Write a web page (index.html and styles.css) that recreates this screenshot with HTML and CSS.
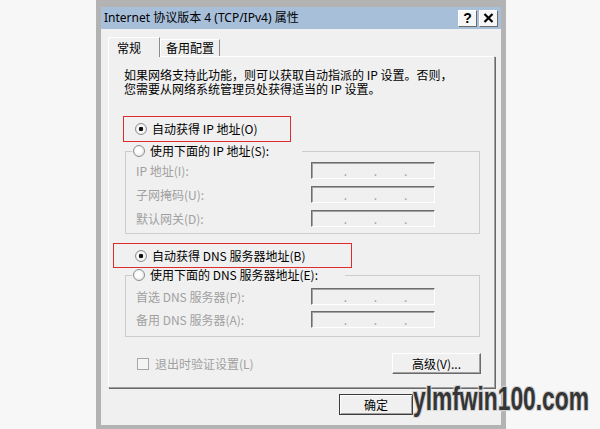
FILE: index.html
```html
<!DOCTYPE html>
<html lang="zh-CN">
    <head>
        <meta charset="UTF-8">
        <title>Internet 协议版本 4 (TCP/IPv4) 属性</title>
        <link rel="stylesheet" href="styles.css">
    </head>
    <body>

        <div class="dialog">
            <div class="titlebar">
                <span class="title">Internet 协议版本 4 (TCP/IPv4) 属性</span>
                <div class="caption-btns">
                    <span class="cap-btn">?</span>
                    <span class="cap-btn">
                        <svg width="11" height="10" viewBox="0 0 11 10">
                            <path d="M1.5 1 L9.5 9 M9.5 1 L1.5 9" stroke="#000" stroke-width="2.2" fill="none"/>
                        </svg>
                    </span>
                </div>
            </div>

            <div class="tabs">
                <div class="tab active">常规</div>
                <div class="tab">备用配置</div>
            </div>

            <div class="panel">
                <p class="desc">如果网络支持此功能，则可以获取自动指派的 IP 设置。否则，<br>您需要从网络系统管理员处获得适当的 IP 设置。</p>

                <div class="option ip-auto"><span class="radio checked"></span>自动获得 IP 地址(O)</div>

                <fieldset class="group ip-group">
                    <legend><span class="radio"></span>使用下面的 IP 地址(S):</legend>
                    <div class="row"><span class="label">IP 地址(I):</span><span class="ipbox"><i>.</i><i>.</i><i>.</i></span></div>
                    <div class="row"><span class="label">子网掩码(U):</span><span class="ipbox"><i>.</i><i>.</i><i>.</i></span></div>
                    <div class="row"><span class="label">默认网关(D):</span><span class="ipbox"><i>.</i><i>.</i><i>.</i></span></div>
                </fieldset>

                <div class="option dns-auto"><span class="radio checked"></span>自动获得 DNS 服务器地址(B)</div>

                <fieldset class="group dns-group">
                    <legend><span class="radio"></span>使用下面的 DNS 服务器地址(E):</legend>
                    <div class="row"><span class="label">首选 DNS 服务器(P):</span><span class="ipbox"><i>.</i><i>.</i><i>.</i></span></div>
                    <div class="row"><span class="label">备用 DNS 服务器(A):</span><span class="ipbox"><i>.</i><i>.</i><i>.</i></span></div>
                </fieldset>

                <div class="panel-foot">
                    <span class="check"></span>
                    <span class="muted">退出时验证设置(L)</span>
                    <button class="btn adv">高级(V)...</button>
                </div>
            </div>

            <div class="dialog-foot">
                <button class="btn ok">确定</button>
            </div>
        </div>

        <div class="watermark">ylmfwin100.com</div>

    </body>
</html>
```

FILE: styles.css
```css
body {
    margin: 0;
    height: 429px;
    overflow: hidden;
    position: relative;
    background: #f7f7f7;
    font-family: "Noto Sans CJK SC", sans-serif;
    font-size: 12px;
    color: #000;
}
.dialog {
    margin-left: 96px;
    width: 410px;
    height: 429px;
    box-sizing: border-box;
    border: 5px solid #b3b3b3;
    border-top-width: 7px;
    border-bottom-width: 4px;
    background: #f0f0f0;
}
.titlebar {
    height: 22px;
    display: flex;
    align-items: center;
    padding: 0 3px;
    background: #a8bfda;
}
.title {
    font-family: "Noto Sans", "Noto Sans CJK SC", sans-serif;
    font-size: 12px;
    line-height: 14px;
}
.caption-btns {
    margin-left: auto;
    display: flex;
    gap: 2px;
}
.cap-btn {
    width: 19px;
    height: 17px;
    box-sizing: border-box;
    display: flex;
    align-items: center;
    justify-content: center;
    border: 1px solid;
    border-color: #fff #6b6b6b #6b6b6b #fff;
    background: #f6f6f6;
    font: bold 14px "Liberation Sans", sans-serif;
}
.tabs {
    display: flex;
    align-items: flex-end;
    height: 19px;
    margin: 8px 0 0 7px;
}
.tab {
    height: 17px;
    box-sizing: border-box;
    padding: 0 5px;
    border: 1px solid;
    border-color: #fff #8a8a8a transparent #fff;
    border-bottom: none;
    line-height: 15px;
}
.tab.active {
    height: 20px;
    margin-bottom: -1px;
    padding: 2px 18px 0 8px;
    position: relative;
    z-index: 1;
    background: #f0f0f0;
}
.panel {
    height: 332px;
    box-sizing: border-box;
    margin: 0 6px 0 7px;
    border: 1px solid;
    border-color: #fff #a0a0a0 #a0a0a0 #fff;
    box-shadow: 1px 1px 0 #696969;
}
.desc {
    margin: 11px 0 0 15px;
    line-height: 14px;
}
.option {
    display: flex;
    align-items: center;
    box-sizing: border-box;
    border: 1px solid #dd2c2c;
    line-height: 14px;
}
.ip-auto {
    width: 168px;
    height: 26px;
    margin: 20px 0 0 14px;
    padding-left: 11px;
}
.dns-auto {
    width: 239px;
    height: 25px;
    margin: 9px 0 0 4px;
    padding-left: 21px;
}
.radio {
    flex: none;
    width: 12px;
    height: 12px;
    box-sizing: border-box;
    margin-right: 5px;
    border: 1px solid #8c8e8f;
    border-radius: 50%;
    background: radial-gradient(circle at 45% 45%, #fff 0, #fff 30%, #d8d8d8 100%);
}
.radio.checked {
    background: radial-gradient(circle, #111 0, #111 2px, #fff 2.6px, #fff 35%, #d8d8d8 100%);
}
.group {
    width: 355px;
    box-sizing: border-box;
    min-width: 0;
    margin: 0 0 0 16px;
    border: 1px solid #cdcdcd;
}
.group legend {
    display: flex;
    align-items: center;
    height: 14px;
    box-sizing: border-box;
    margin-left: 6px;
    padding: 0 1px;
    line-height: 14px;
}
.ip-group {
    margin-top: 2px;
    padding: 4px 0 6px;
}
.ip-group legend {
    width: 170px;
}
.dns-group {
    padding: 6px 0 8px;
}
.dns-group legend {
    width: 213px;
}
.row {
    display: flex;
    align-items: center;
    height: 17px;
    padding-left: 10px;
}
.ip-group .row + .row {
    margin-top: 7px;
}
.dns-group .row + .row {
    margin-top: 6px;
}
.label {
    width: 175px;
    color: #a0a0a0;
}
.ipbox {
    width: 124px;
    height: 17px;
    box-sizing: border-box;
    display: flex;
    align-items: center;
    justify-content: space-evenly;
    padding-left: 5px;
    border: 1px solid;
    border-color: #6d6d6d #fff #fff #6d6d6d;
    box-shadow: inset 1px 1px 0 #a3a3a3;
    background: #f0f0f0;
    color: #a0a0a0;
    line-height: 14px;
}
.ipbox i {
    font-style: normal;
}
.panel-foot {
    display: flex;
    align-items: center;
    height: 21px;
    margin: 16px 13px 0 28px;
}
.check {
    width: 12px;
    height: 12px;
    box-sizing: border-box;
    margin-right: 6px;
    border: 1px solid #a6a6a6;
    background: #f4f4f4;
}
.muted {
    color: #a0a0a0;
}
.btn {
    height: 21px;
    box-sizing: border-box;
    padding: 0;
    border: 1px solid;
    border-color: #fff #6b6b6b #6b6b6b #fff;
    box-shadow: inset -1px -1px 0 #a0a0a0;
    background: #f0f0f0;
    font-family: "Noto Sans CJK SC", sans-serif;
    font-size: 12px;
    color: #000;
}
.adv {
    width: 89px;
    margin-left: auto;
}
.dialog-foot {
    margin: 6px 0 0 238px;
}
.ok {
    width: 74px;
    border-color: #3c3c3c;
    box-shadow: inset 1px 1px 0 #fff, inset -1px -1px 0 #a0a0a0;
}
.watermark {
    position: absolute;
    left: 413px;
    top: 379px;
    font-family: "Liberation Sans", sans-serif;
    font-weight: bold;
    font-size: 33px;
    line-height: 40px;
    color: #353535;
    transform: scaleX(0.69);
    transform-origin: left top;
    text-shadow: -1px -1px 0 #d0d0d0, 1px -1px 0 #d0d0d0, -1px 1px 0 #d0d0d0, 1px 1px 0 #d0d0d0, 0 0 3px #fff;
}
```
